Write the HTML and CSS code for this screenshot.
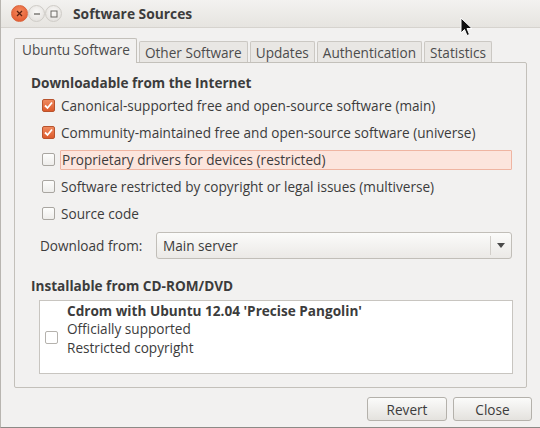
FILE: index.html
```html
<!DOCTYPE html>
<html>
<head>
<meta charset="utf-8">
<link rel="stylesheet" href="styles.css">
</head>
<body>
<div class="window">
  <div class="titlebar">
    <div class="wbtns">
      <span class="wbtn close"><svg width="7" height="7" viewBox="0 0 7 7"><path d="M1 1L6 6M6 1L1 6" stroke="#5a2010" stroke-width="1.3"/></svg></span>
      <span class="wbtn"><svg width="8" height="8" viewBox="0 0 8 8"><path d="M1 4H7" stroke="#6a6864" stroke-width="1.3"/></svg></span>
      <span class="wbtn"><svg width="8" height="8" viewBox="0 0 8 8"><rect x="1" y="1" width="6" height="6" fill="none" stroke="#6a6864" stroke-width="1"/></svg></span>
    </div>
    <div class="title">Software Sources</div>
    <svg class="cursor" width="14" height="21" viewBox="0 0 14 21"><path d="M1 1V16L4.5 12.5L7 18.5L9.5 17.5L7 11.5H12Z" fill="#111" stroke="#fff" stroke-width="1" stroke-linejoin="round"/></svg>
  </div>
  <div class="content">
    <div class="tabs">
      <div class="tab active">Ubuntu Software</div>
      <div class="tab">Other Software</div>
      <div class="tab">Updates</div>
      <div class="tab">Authentication</div>
      <div class="tab">Statistics</div>
    </div>
    <div class="panel">
      <div class="heading">Downloadable from the Internet</div>
      <div class="row"><span class="cb checked"><svg width="11" height="11" viewBox="0 0 11 11"><path d="M2 5.5L4.5 8L9 2.5" fill="none" stroke="#fff" stroke-width="1.8"/></svg></span><span class="label">Canonical-supported free and open-source software (main)</span></div>
      <div class="row"><span class="cb checked"><svg width="11" height="11" viewBox="0 0 11 11"><path d="M2 5.5L4.5 8L9 2.5" fill="none" stroke="#fff" stroke-width="1.8"/></svg></span><span class="label">Community-maintained free and open-source software (universe)</span></div>
      <div class="row"><span class="cb"></span><span class="label hl">Proprietary drivers for devices (restricted)</span></div>
      <div class="row"><span class="cb"></span><span class="label">Software restricted by copyright or legal issues (multiverse)</span></div>
      <div class="row"><span class="cb"></span><span class="label">Source code</span></div>
      <div class="dlrow">
        <span class="dllabel">Download from:</span>
        <div class="combo"><span class="combo-text">Main server</span><span class="combo-arrow"><svg width="8" height="5" viewBox="0 0 8 5"><path d="M0 0H8L4 5Z" fill="#4a4a4a"/></svg></span></div>
      </div>
      <div class="heading h2">Installable from CD-ROM/DVD</div>
      <div class="list">
        <span class="cb"></span>
        <div class="cdtext">
          <div class="cdtitle">Cdrom with Ubuntu 12.04 'Precise Pangolin'</div>
          <div>Officially supported</div>
          <div>Restricted copyright</div>
        </div>
      </div>
    </div>
    <div class="actions">
      <button class="btn revert">Revert</button>
      <button class="btn closebtn">Close</button>
    </div>
  </div>
</div>
</body>
</html>
```
FILE: styles.css
```css
html, body { margin: 0; padding: 0; }
body {
  width: 540px; height: 428px; overflow: hidden;
  font-family: "Open Sans", "DejaVu Sans", sans-serif;
  font-size: 13.6px;
  color: #3c3c3c;
  background: #f2f1f0;
}
.window {
  width: 540px; height: 428px;
  box-sizing: border-box;
  background: #f2f1f0;
  border-left: 1px solid #b8b5b0;
  border-bottom: 1px solid #8c8a86;
  position: relative;
}
.titlebar {
  height: 28px;
  display: flex; align-items: center;
  background: linear-gradient(#f3f2f0, #e6e4e0);
  border-bottom: 1px solid #d6d3ce;
  box-sizing: border-box;
  position: relative;
}
.wbtns { display: flex; gap: 0px; margin-left: 10px; width: 62px; }
.wbtn {
  width: 17px; height: 17px; border-radius: 50%;
  display: flex; align-items: center; justify-content: center;
  background: radial-gradient(circle at 50% 40%, #fbfaf9, #dedbd7);
  border: 1px solid #cfccc7;
  box-sizing: border-box;
}
.wbtn.close {
  background: radial-gradient(circle at 50% 35%, #f58a5e, #e0532a);
  border-color: #d9643c;
}
.title { font-weight: bold; font-size: 13.8px; color: #3c3c3c; }
.cursor { position: absolute; left: 459px; top: 17px; }
.content { padding: 10px 0 0 13px; }
.tabs { display: flex; align-items: flex-end; height: 24px; }
.tab {
  height: 21px; box-sizing: border-box;
  padding: 0 5px; margin-right: 2px;
  border: 1px solid #cbc8c3; border-bottom: none;
  border-radius: 2px 2px 0 0;
  background: #e9e7e4;
  display: flex; align-items: center;
  color: #4c4c4c;
}
.tab.active {
  height: 25px; background: #f2f1f0;
  border-color: #c3c0ba;
  position: relative; top: 1px;
  padding: 0 6px 3px 7px;
}
.panel {
  width: 513px; height: 326px; box-sizing: border-box;
  border: 1px solid #c3c0ba;
  border-radius: 0 2px 2px 2px;
  padding: 11px 14px 0 16px;
}
.heading { font-weight: bold; height: 18px; line-height: 18px; }
.h2 { margin-top: 18px; }
.row { height: 27px; display: flex; align-items: center; margin-left: 11px; }
.cb {
  width: 13px; height: 13px; box-sizing: border-box;
  border: 1px solid #a9a6a1; border-radius: 2px;
  background: linear-gradient(#fdfdfc, #eeedeb);
  display: inline-flex; align-items: center; justify-content: center;
  flex: none;
}
.cb.checked {
  background: linear-gradient(#ef8a5f, #dc5a2c);
  border-color: #b8532d;
}
.label { margin-left: 6px; }
.label.hl {
  flex: 1; height: 20px; box-sizing: border-box;
  margin-left: 5px; padding-left: 1px;
  background: #fce5dd; border: 1px solid #efb5a2; border-radius: 1px;
  display: flex; align-items: center;
}
.dlrow { display: flex; align-items: center; margin-top: 5px; height: 27px; }
.dllabel { margin-left: 9px; width: 116px; }
.combo {
  flex: 1; height: 27px; box-sizing: border-box;
  border: 1px solid #c1beb8; border-radius: 3px;
  background: linear-gradient(#fbfbfa, #ebe9e6);
  display: flex; align-items: center;
}
.combo-text { flex: 1; padding-left: 6px; }
.combo-arrow {
  width: 20px; height: 19px; border-left: 1px solid #d1cec9;
  display: flex; align-items: center; justify-content: center;
}
.list {
  margin: 5px -1px 0 8px; height: 74px; box-sizing: border-box;
  background: #fff; border: 1px solid #c8c5c0;
  display: flex; align-items: center; padding-left: 5px;
}
.list .cb { background: #fff; border-color: #b5b2ad; }
.cdtext { margin-left: 9px; line-height: 18.6px; align-self: flex-start; padding-top: 0.5px; }
.cdtitle { font-weight: bold; }
.actions { display: flex; justify-content: flex-end; gap: 6px; margin-top: 9px; padding-right: 8px; }
.btn {
  height: 24px; box-sizing: border-box;
  font-family: inherit; font-size: 13.6px; color: #3c3c3c;
  border: 1px solid #b4b1ab; border-radius: 3px;
  background: linear-gradient(#fbfbfa, #e4e2de);
  padding: 0;
}
.revert { width: 80px; }
.closebtn { width: 79px; }
```
